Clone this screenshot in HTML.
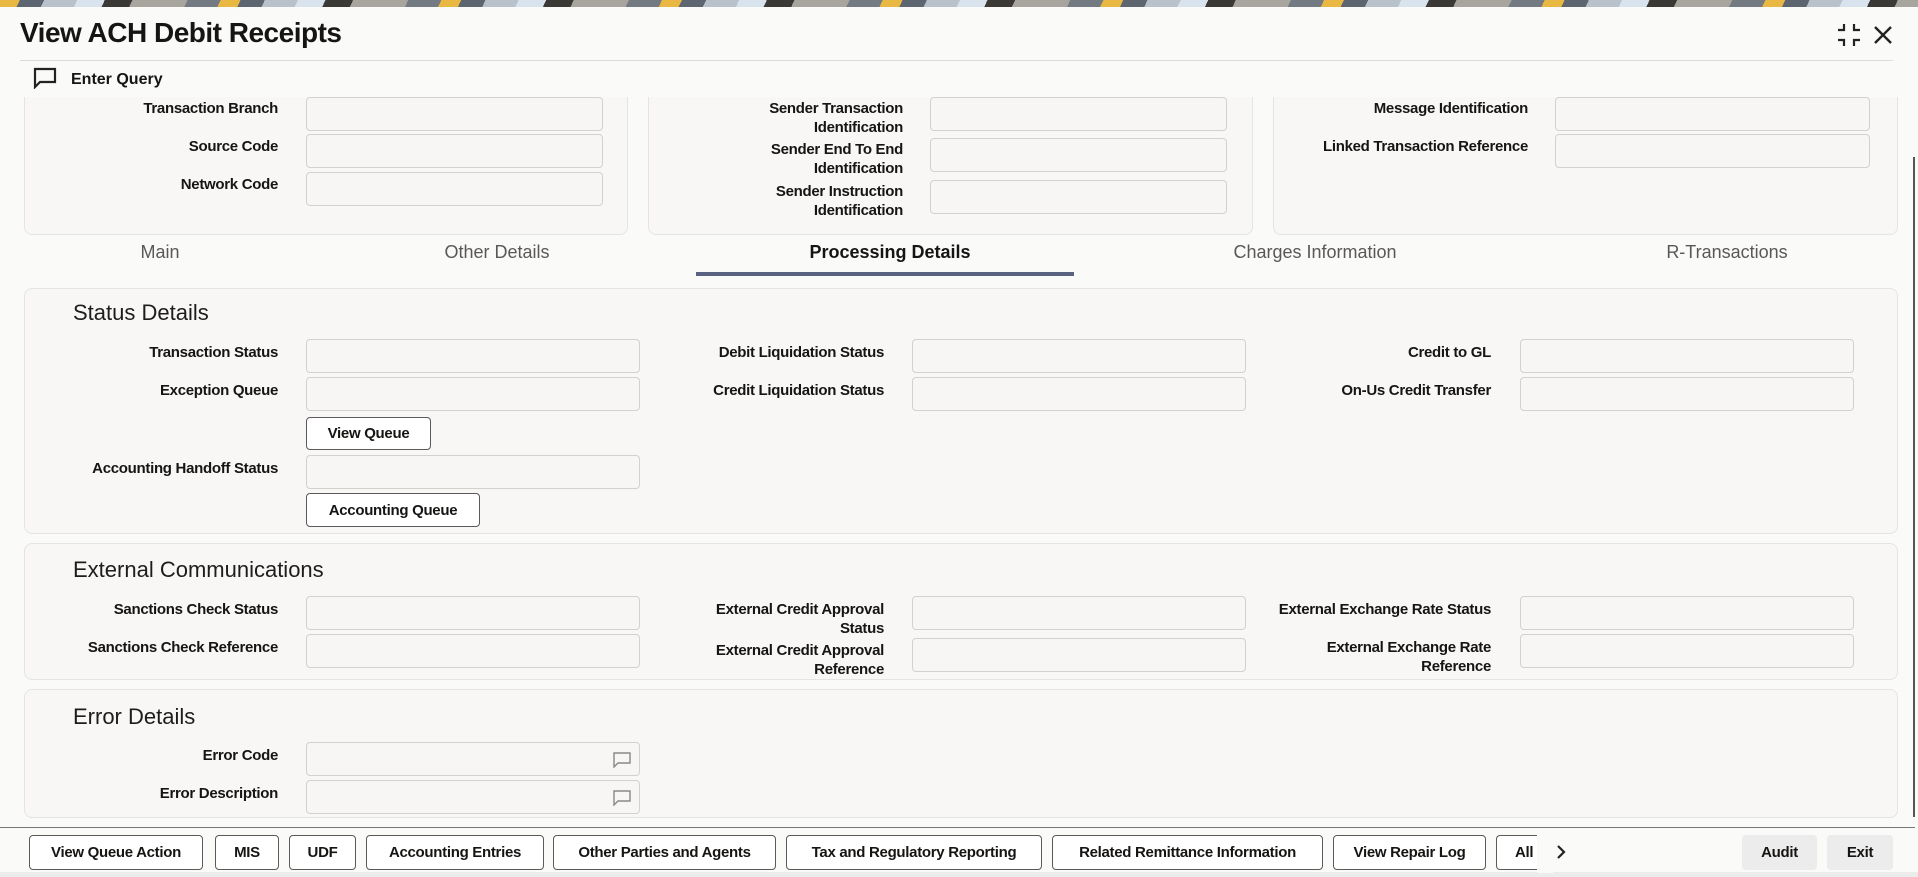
<!DOCTYPE html>
<html><head><meta charset="utf-8"><style>
*{margin:0;padding:0;box-sizing:border-box}
body{width:1918px;height:877px;overflow:hidden;background:#fafaf9;font-family:"Liberation Sans",sans-serif;color:#161513;position:relative}
.ban{position:absolute;left:0;top:0;width:1918px;height:7px;background:repeating-linear-gradient(115deg,#e9b843 0 18px,#5d6670 18px 40px,#b9c1ca 40px 70px,#d9e3ee 70px 95px,#3b3936 95px 120px,#a8a49e 120px 170px,#747a82 170px 200px)}
.a{position:absolute}
.panel{position:absolute;background:#f8f7f5;border:1px solid #e6e4e0;border-radius:8px}
.inp{position:absolute;background:#f7f6f4;border:1px solid #d3d1cd;border-radius:4px;height:34px}
.lbl{position:absolute;font-size:15px;font-weight:bold;text-align:right;line-height:19px;letter-spacing:-0.3px}
.h{position:absolute;font-size:22px;color:#1e1d1b}
.tab{position:absolute;top:242px;font-size:18px;color:#5a5857;transform:translateX(-50%);white-space:nowrap}
.btn{position:absolute;border:1px solid #5c5a58;border-radius:4px;background:#fff;font-size:15px;font-weight:bold;display:flex;align-items:center;justify-content:center;white-space:nowrap;letter-spacing:-0.3px}
.fb{top:835px;height:35px}
.bub{position:absolute;right:8px;top:9px}
</style></head><body>
<div class="ban"></div>
<div class="a" style="left:20px;top:17px;font-size:28px;font-weight:bold;letter-spacing:-0.5px">View ACH Debit Receipts</div>
<svg class="a" style="left:1836px;top:22px" width="26" height="26" viewBox="0 0 26 26" fill="none" stroke="#222" stroke-width="2.2"><path d="M2 8h6V2M18 2v6h6M2 18h6v6M24 18h-6v6"/></svg>
<svg class="a" style="left:1872px;top:24px" width="22" height="22" viewBox="0 0 22 22" stroke="#222" stroke-width="2.4"><path d="M3 3l16 16M19 3L3 19"/></svg>
<div class="a" style="left:20px;top:60px;width:1873px;height:1px;background:#dedcd8"></div>

<div class="panel" style="left:24px;top:92px;width:604px;height:143px;border-top:none;border-radius:0 0 8px 8px"></div>
<div class="panel" style="left:648px;top:92px;width:605px;height:143px;border-top:none;border-radius:0 0 8px 8px"></div>
<div class="panel" style="left:1273px;top:92px;width:625px;height:143px;border-top:none;border-radius:0 0 8px 8px"></div>
<div class="a" style="left:0;top:92px;width:1910px;height:5px;background:#fafaf9"></div>

<svg class="a" style="left:33px;top:67px" width="24" height="22" viewBox="0 0 24 22" fill="none" stroke="#222" stroke-width="2.2"><path d="M2 2h20v13H7l-5 5z"/></svg>
<div class="a" style="left:71px;top:70px;font-size:16px;font-weight:bold;line-height:19px">Enter Query</div>

<div class="lbl" style="right:1640px;top:99px">Transaction Branch</div>
<div class="inp" style="left:306px;top:97px;width:297px"></div>
<div class="lbl" style="right:1640px;top:137px">Source Code</div>
<div class="inp" style="left:306px;top:134px;width:297px"></div>
<div class="lbl" style="right:1640px;top:175px">Network Code</div>
<div class="inp" style="left:306px;top:172px;width:297px"></div>

<div class="lbl" style="right:1015px;top:99px">Sender Transaction<br>Identification</div>
<div class="inp" style="left:930px;top:97px;width:297px"></div>
<div class="lbl" style="right:1015px;top:140px">Sender End To End<br>Identification</div>
<div class="inp" style="left:930px;top:138px;width:297px"></div>
<div class="lbl" style="right:1015px;top:182px">Sender Instruction<br>Identification</div>
<div class="inp" style="left:930px;top:180px;width:297px"></div>

<div class="lbl" style="right:390px;top:99px">Message Identification</div>
<div class="inp" style="left:1555px;top:97px;width:315px"></div>
<div class="lbl" style="right:390px;top:137px">Linked Transaction Reference</div>
<div class="inp" style="left:1555px;top:134px;width:315px"></div>

<div class="tab" style="left:160px">Main</div>
<div class="tab" style="left:497px">Other Details</div>
<div class="tab" style="left:890px;color:#161513;font-weight:bold">Processing Details</div>
<div class="tab" style="left:1315px">Charges Information</div>
<div class="tab" style="left:1727px">R-Transactions</div>
<div class="a" style="left:696px;top:272px;width:378px;height:4px;background:#5a6282"></div>

<div class="a" style="left:1913px;top:157px;width:2px;height:660px;background:#555"></div>

<div class="panel" style="left:24px;top:288px;width:1874px;height:246px"></div>
<div class="h" style="left:73px;top:300px">Status Details</div>
<div class="lbl" style="right:1640px;top:343px">Transaction Status</div>
<div class="inp" style="left:306px;top:339px;width:334px"></div>
<div class="lbl" style="right:1640px;top:381px">Exception Queue</div>
<div class="inp" style="left:306px;top:377px;width:334px"></div>
<div class="btn" style="left:306px;top:417px;width:125px;height:33px">View Queue</div>
<div class="lbl" style="right:1640px;top:459px">Accounting Handoff Status</div>
<div class="inp" style="left:306px;top:455px;width:334px"></div>
<div class="btn" style="left:306px;top:493px;width:174px;height:34px">Accounting Queue</div>

<div class="lbl" style="right:1034px;top:343px">Debit Liquidation Status</div>
<div class="inp" style="left:912px;top:339px;width:334px"></div>
<div class="lbl" style="right:1034px;top:381px">Credit Liquidation Status</div>
<div class="inp" style="left:912px;top:377px;width:334px"></div>
<div class="lbl" style="right:427px;top:343px">Credit to GL</div>
<div class="inp" style="left:1520px;top:339px;width:334px"></div>
<div class="lbl" style="right:427px;top:381px">On-Us Credit Transfer</div>
<div class="inp" style="left:1520px;top:377px;width:334px"></div>

<div class="panel" style="left:24px;top:543px;width:1874px;height:137px"></div>
<div class="h" style="left:73px;top:557px">External Communications</div>
<div class="lbl" style="right:1640px;top:600px">Sanctions Check Status</div>
<div class="inp" style="left:306px;top:596px;width:334px"></div>
<div class="lbl" style="right:1640px;top:638px">Sanctions Check Reference</div>
<div class="inp" style="left:306px;top:634px;width:334px"></div>
<div class="lbl" style="right:1034px;top:600px">External Credit Approval<br>Status</div>
<div class="inp" style="left:912px;top:596px;width:334px"></div>
<div class="lbl" style="right:1034px;top:641px">External Credit Approval<br>Reference</div>
<div class="inp" style="left:912px;top:638px;width:334px"></div>
<div class="lbl" style="right:427px;top:600px">External Exchange Rate Status</div>
<div class="inp" style="left:1520px;top:596px;width:334px"></div>
<div class="lbl" style="right:427px;top:638px">External Exchange Rate<br>Reference</div>
<div class="inp" style="left:1520px;top:634px;width:334px"></div>

<div class="panel" style="left:24px;top:689px;width:1874px;height:129px"></div>
<div class="h" style="left:73px;top:704px">Error Details</div>
<div class="lbl" style="right:1640px;top:746px">Error Code</div>
<div class="inp" style="left:306px;top:742px;width:334px"><svg class="bub" width="18" height="16" viewBox="0 0 18 16" fill="none" stroke="#888" stroke-width="1.4"><path d="M1 1h16v10H5l-4 4z"/></svg></div>
<div class="lbl" style="right:1640px;top:784px">Error Description</div>
<div class="inp" style="left:306px;top:780px;width:334px"><svg class="bub" width="18" height="16" viewBox="0 0 18 16" fill="none" stroke="#888" stroke-width="1.4"><path d="M1 1h16v10H5l-4 4z"/></svg></div>

<div class="a" style="left:0;top:827px;width:1915px;height:1px;background:#777"></div>
<div class="a" style="left:0;top:872px;width:1918px;height:5px;background:#ececec"></div>
<div class="btn fb" style="left:29px;width:174px">View Queue Action</div>
<div class="btn fb" style="left:215px;width:64px">MIS</div>
<div class="btn fb" style="left:289px;width:67px">UDF</div>
<div class="btn fb" style="left:366px;width:178px">Accounting Entries</div>
<div class="btn fb" style="left:553px;width:223px">Other Parties and Agents</div>
<div class="btn fb" style="left:786px;width:256px">Tax and Regulatory Reporting</div>
<div class="btn fb" style="left:1052px;width:271px">Related Remittance Information</div>
<div class="btn fb" style="left:1333px;width:153px">View Repair Log</div>
<div class="btn fb" style="left:1496px;width:50px;justify-content:flex-start;padding-left:18px;border-right:none;border-radius:4px 0 0 4px;overflow:hidden">All</div>
<div class="a" style="left:1537px;top:833px;width:16px;height:40px;background:#fafaf9"></div>
<svg class="a" style="left:1556px;top:844px" width="10" height="16" viewBox="0 0 10 16" fill="none" stroke="#222" stroke-width="2.2"><path d="M2 2l6 6-6 6"/></svg>
<div class="btn fb" style="left:1742px;width:75px;border:none;background:#ececec">Audit</div>
<div class="btn fb" style="left:1827px;width:66px;border:none;background:#ececec">Exit</div>
</body></html>
